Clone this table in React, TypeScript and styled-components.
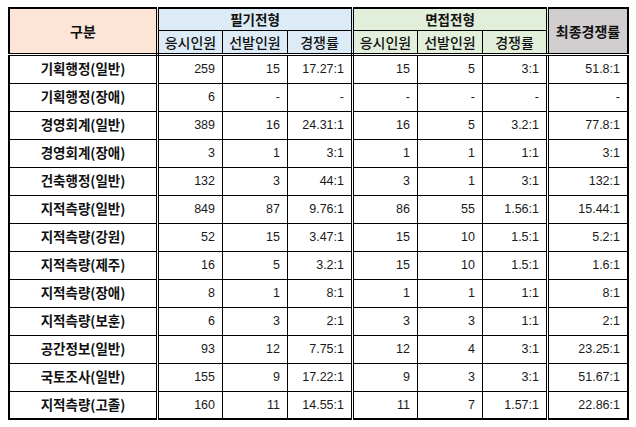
import React from "react";
import styled, { createGlobalStyle } from "styled-components";

const GlobalStyle = createGlobalStyle`
  html, body { margin: 0; padding: 0; background: #ffffff; }
  body { font-family: "Noto Sans CJK KR", "Noto Sans", sans-serif; color: #000; }
`;

const Page = styled.div`
  padding: 7px 0 0 8px;
`;

const Table = styled.table`
  border-collapse: collapse;
  table-layout: fixed;
  width: 621px;
  border: 2px solid #000;
`;

type Group = "name" | "written" | "interview" | "final";

const bg: Record<Group, string> = {
  name: "#fce4d6",
  written: "#ddebf7",
  interview: "#e2efda",
  final: "#d0cece",
};

const HeadCell = styled.th<{ $group: Group; $sepRight?: boolean; $sub?: boolean; $big?: boolean }>`
  background: ${(p) => bg[p.$group]};
  border: 1px solid #000;
  ${(p) => (p.$sepRight ? "border-right: 3px double #000;" : "")}
  border-bottom: ${(p) => (p.$sub ? "3px double #000" : "1px solid #000")};
  font-family: "Noto Sans CJK KR", sans-serif;
  font-size: ${(p) => (p.$big || p.$sub ? "14px" : "13.5px")};
  font-weight: ${(p) => (p.$sub && !p.$big ? 500 : 700)};
  color: #111;
  text-align: center;
  vertical-align: middle;
  padding: 0;
  line-height: 1;
  white-space: nowrap;
`;

const TopRow = styled.tr`
  height: 22px;
`;

const SubRow = styled.tr`
  height: 24px;
`;

const DataRow = styled.tr<{ $first?: boolean }>`
  height: ${(p) => (p.$first ? "29px" : "28px")};
`;

const NameCell = styled.td`
  border: 1px solid #000;
  border-right: 3px double #000;
  font-family: "Noto Sans CJK KR", sans-serif;
  font-size: 13.5px;
  font-weight: 700;
  color: #111;
  text-align: center;
  vertical-align: middle;
  padding: 0;
  line-height: 1;
  white-space: nowrap;
`;

const NumCell = styled.td<{ $sepRight?: boolean }>`
  border: 1px solid #000;
  ${(p) => (p.$sepRight ? "border-right: 3px double #000;" : "")}
  font-family: "Liberation Sans", Arial, sans-serif;
  font-size: 12.5px;
  color: #1a1a1a;
  text-align: right;
  vertical-align: middle;
  padding: 0 7px 0 0;
  line-height: 1;
  white-space: nowrap;
`;

type Row = [string, string, string, string, string, string, string, string];

const rows: Row[] = [
  ["기획행정(일반)", "259", "15", "17.27:1", "15", "5", "3:1", "51.8:1"],
  ["기획행정(장애)", "6", "-", "-", "-", "-", "-", "-"],
  ["경영회계(일반)", "389", "16", "24.31:1", "16", "5", "3.2:1", "77.8:1"],
  ["경영회계(장애)", "3", "1", "3:1", "1", "1", "1:1", "3:1"],
  ["건축행정(일반)", "132", "3", "44:1", "3", "1", "3:1", "132:1"],
  ["지적측량(일반)", "849", "87", "9.76:1", "86", "55", "1.56:1", "15.44:1"],
  ["지적측량(강원)", "52", "15", "3.47:1", "15", "10", "1.5:1", "5.2:1"],
  ["지적측량(제주)", "16", "5", "3.2:1", "15", "10", "1.5:1", "1.6:1"],
  ["지적측량(장애)", "8", "1", "8:1", "1", "1", "1:1", "8:1"],
  ["지적측량(보훈)", "6", "3", "2:1", "3", "3", "1:1", "2:1"],
  ["공간정보(일반)", "93", "12", "7.75:1", "12", "4", "3:1", "23.25:1"],
  ["국토조사(일반)", "155", "9", "17.22:1", "9", "3", "3:1", "51.67:1"],
  ["지적측량(고졸)", "160", "11", "14.55:1", "11", "7", "1.57:1", "22.86:1"],
];

const widths = [148.5, 65, 65, 65, 65, 65, 65, 80.5];

export default function App() {
  return (
    <>
      <GlobalStyle />
      <Page>
        <Table>
          <colgroup>
            {widths.map((w, i) => (
              <col key={i} style={{ width: `${w}px` }} />
            ))}
          </colgroup>
          <thead>
            <TopRow>
              <HeadCell $group="name" $sepRight $sub $big rowSpan={2}>
                구분
              </HeadCell>
              <HeadCell $group="written" $sepRight colSpan={3}>
                필기전형
              </HeadCell>
              <HeadCell $group="interview" $sepRight colSpan={3}>
                면접전형
              </HeadCell>
              <HeadCell $group="final" $sub $big rowSpan={2}>
                최종경쟁률
              </HeadCell>
            </TopRow>
            <SubRow>
              <HeadCell $group="written" $sub>응시인원</HeadCell>
              <HeadCell $group="written" $sub>선발인원</HeadCell>
              <HeadCell $group="written" $sub $sepRight>경쟁률</HeadCell>
              <HeadCell $group="interview" $sub>응시인원</HeadCell>
              <HeadCell $group="interview" $sub>선발인원</HeadCell>
              <HeadCell $group="interview" $sub $sepRight>경쟁률</HeadCell>
            </SubRow>
          </thead>
          <tbody>
            {rows.map((r, i) => (
              <DataRow key={r[0]} $first={i === 0}>
                <NameCell>{r[0]}</NameCell>
                <NumCell>{r[1]}</NumCell>
                <NumCell>{r[2]}</NumCell>
                <NumCell $sepRight>{r[3]}</NumCell>
                <NumCell>{r[4]}</NumCell>
                <NumCell>{r[5]}</NumCell>
                <NumCell $sepRight>{r[6]}</NumCell>
                <NumCell>{r[7]}</NumCell>
              </DataRow>
            ))}
          </tbody>
        </Table>
      </Page>
    </>
  );
}
